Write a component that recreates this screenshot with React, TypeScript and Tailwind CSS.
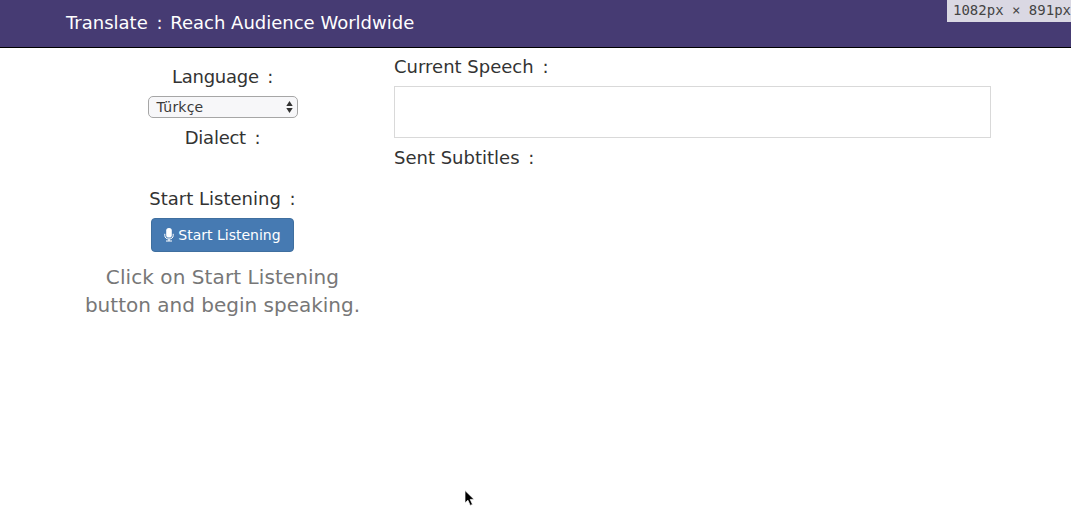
import type { ReactNode } from 'react';

function Heading({ className = '', children }: { className?: string; children: ReactNode }) {
  return (
    <h2 className={`whitespace-nowrap text-[18px] leading-5 text-[#333] ${className}`}>
      {children} <span className="ml-[3px]">:</span>
    </h2>
  );
}

function MicIcon() {
  return (
    <svg className="h-[14px] w-[10px] shrink-0" viewBox="0 0 10 14" fill="none" stroke="currentColor">
      <rect x="2.2" y="0" width="5.6" height="9.6" rx="2.6" fill="currentColor" stroke="none" />
      <path d="M0.8 5.8v1.8C0.8 9.7 2.6 11 5 11s4.2-1.3 4.2-3.4V5.8" strokeWidth="1" />
      <path d="M5 11v2M2 13h6" strokeWidth="1.2" />
    </svg>
  );
}

function LanguageSelect() {
  return (
    <button className="flex h-[22px] w-[150px] items-center justify-between rounded-[5px] border border-[#a6a6a6] bg-[#f7f7f9] pr-[4px] pl-2 text-[14px] leading-5 text-[#3a3a3a]">
      <span className="tracking-[0.2px]">Türkçe</span>
      <svg className="h-3 w-[7px]" viewBox="0 0 7 12" fill="#333">
        <path d="M3.5 0 6.7 5H0.3zM3.5 12 0.3 7h6.4z" />
      </svg>
    </button>
  );
}

export default function App() {
  return (
    <div className="relative h-[526px] w-[1071px] overflow-hidden bg-white font-['DejaVu_Sans',Verdana,sans-serif]">
      <header className="flex h-12 items-center border-b border-black bg-[#463b73] pb-[2px] pl-[66px]">
        <h1 className="whitespace-nowrap text-[18px] leading-5 text-white">
          Translate <span className="mr-[2px] ml-[3px]">:</span> Reach Audience Worldwide
        </h1>
      </header>

      <main className="flex">
        <section className="ml-[66px] flex w-[313px] flex-col items-center pt-[19px]">
          <Heading className="tracking-[-0.25px]">Language</Heading>
          <div className="mt-[9px]">
            <LanguageSelect />
          </div>
          <Heading className="mt-[10px] tracking-[-0.25px]">Dialect</Heading>
          <Heading className="mt-[41px]">Start Listening</Heading>
          <button className="mt-[9px] flex h-[34px] w-[143px] items-center justify-center gap-1 rounded-[4px] border border-[#3f6f9f] bg-[#467ab2] text-[14px] leading-5 text-white">
            <MicIcon />
            <span className="whitespace-nowrap">Start Listening</span>
          </button>
          <p className="mt-[11px] whitespace-nowrap text-center text-[20px] leading-7 text-[#777]">
            <span className="tracking-[0.08px]">Click on Start Listening</span>
            <br />
            button and begin speaking.
          </p>
        </section>

        <section className="ml-[15px] w-[597px] pt-[9px]">
          <Heading>Current Speech</Heading>
          <div className="mt-[9px] h-[52px] border border-[#d9d9d9]" />
          <Heading className="mt-[10px]">Sent Subtitles</Heading>
        </section>
      </main>

      <div className="absolute top-0 left-[947px] h-[22px] w-[124px] overflow-hidden whitespace-nowrap bg-[#dad8e3] pl-[6px] font-['DejaVu_Sans_Mono',monospace] text-[14px] leading-[21px] text-[#444]">
        1082px × 891px
      </div>

      <svg className="absolute top-[490px] left-[464px] h-[17px] w-[12px]" viewBox="0 0 12 17">
        <path d="M1 0.5v12.4l2.9-2.7 2.3 5.2 2.3-1-2.3-5h3.9z" fill="#000" stroke="#fff" strokeWidth="0.7" />
      </svg>
    </div>
  );
}
